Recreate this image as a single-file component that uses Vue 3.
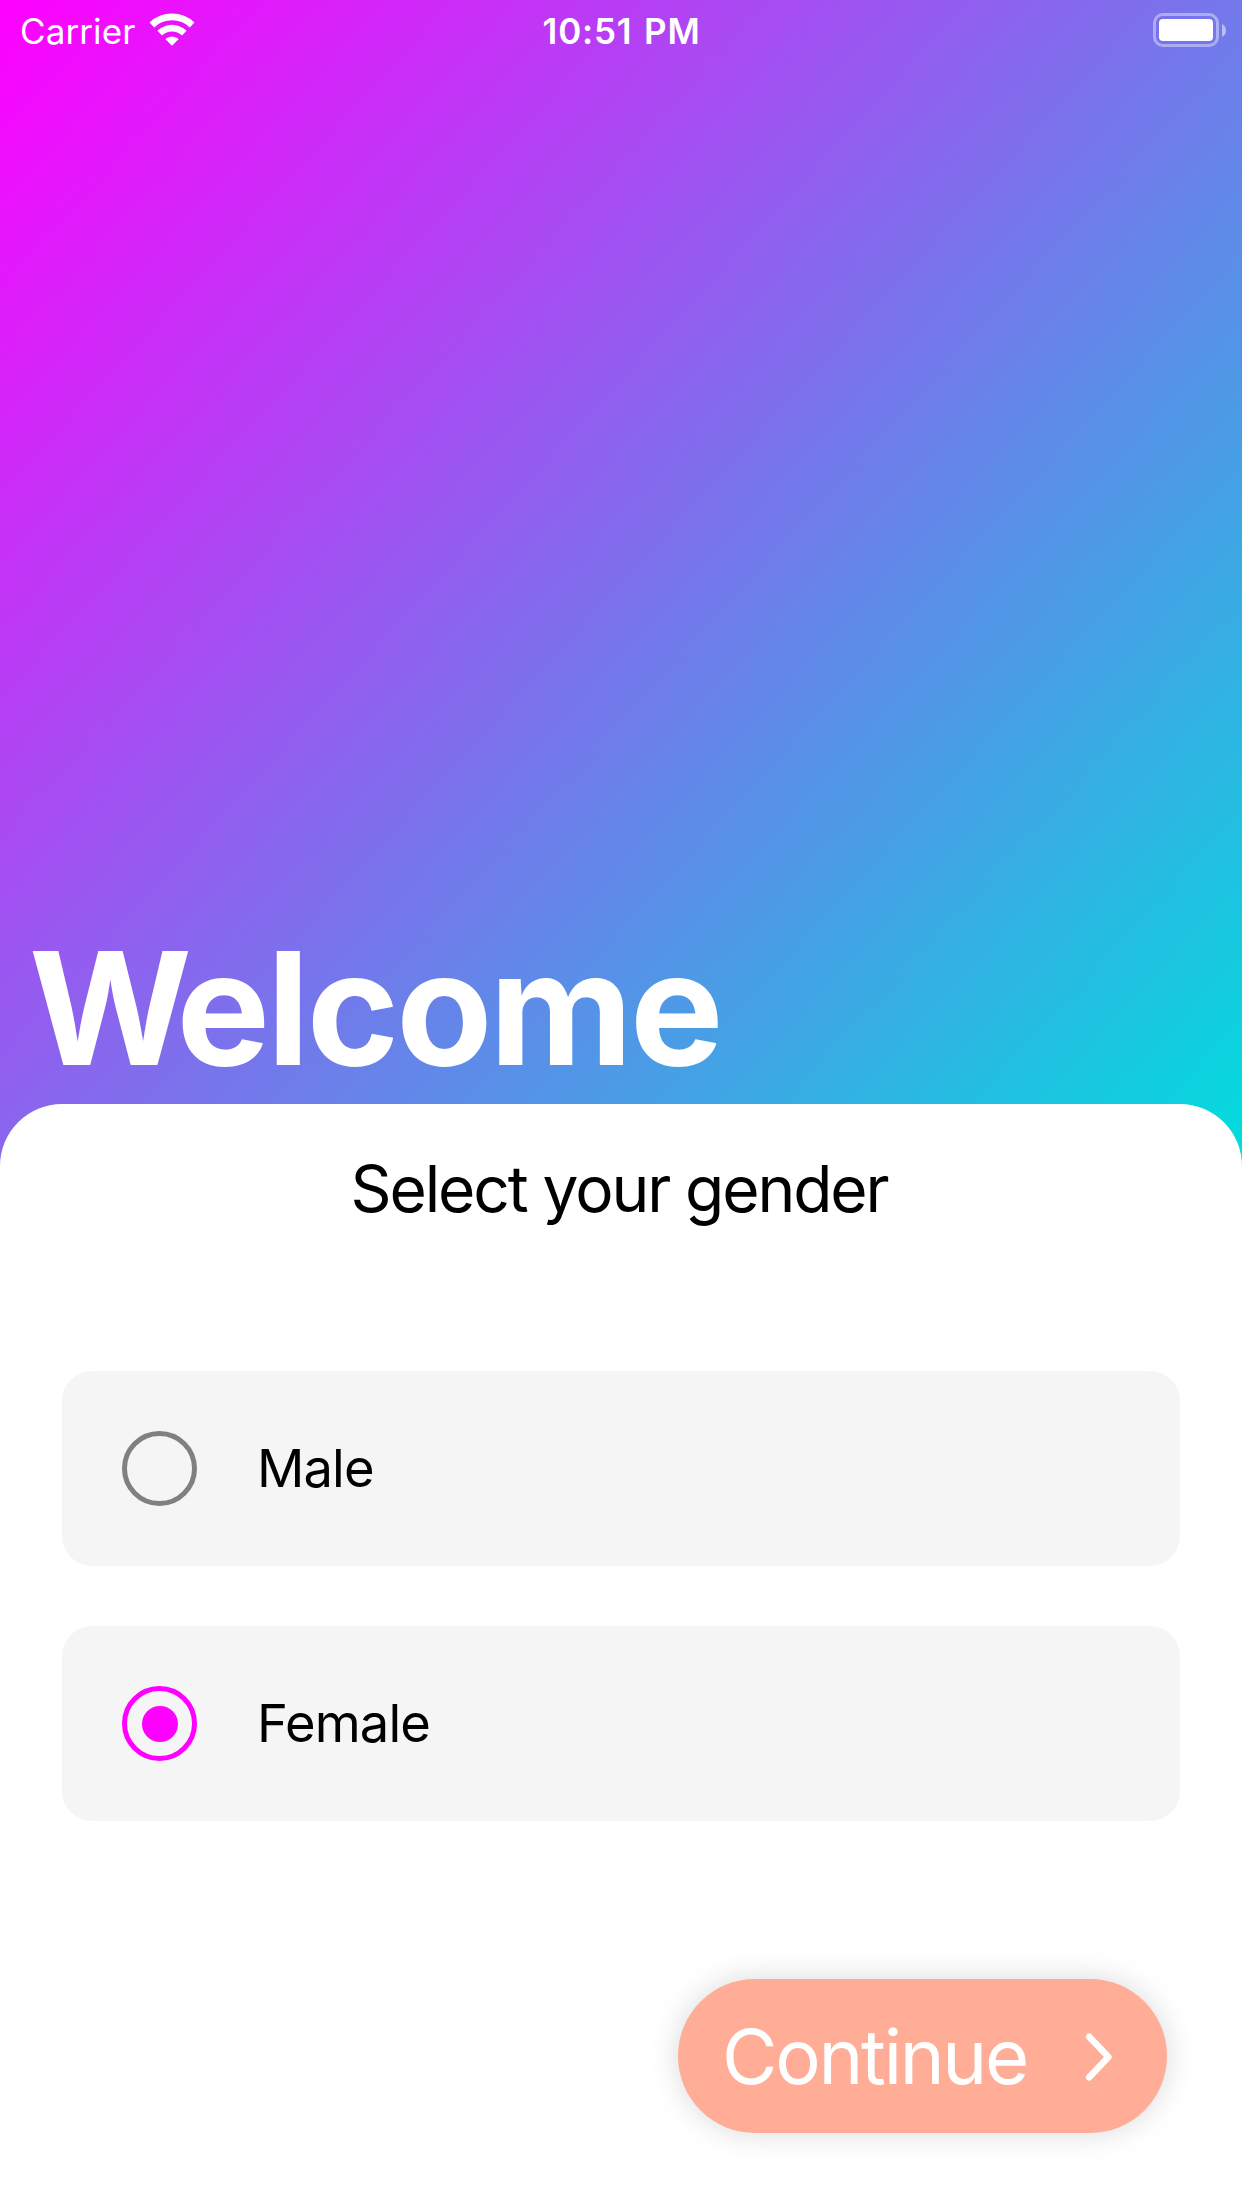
<script setup>
import { ref } from 'vue'

const options = ['Male', 'Female']
const selected = ref('Female')
</script>

<template>
  <main class="screen">
    <section class="hero">
      <div class="status">
        <div class="carrier">
          <span class="carrier-name">Carrier</span>
          <svg class="wifi" width="46" height="34" viewBox="-23 -33 46 34">
            <path d="M-22.4-23.6A32.6 32.6 0 0 1 22.4-23.6L17.8-18.6A25.6 25.6 0 0 0-17.8-18.6Z" />
            <path d="M-14.6-15.3A21.2 21.2 0 0 1 14.6-15.3L10-10.6A14.6 14.6 0 0 0-10-10.6Z" />
            <path d="M-6.7-6.9A9.8 9.8 0 0 1 6.7-6.9L0-.3Z" />
          </svg>
        </div>
        <span class="time">10:51 PM</span>
        <div class="battery">
          <div class="shell"><div class="charge"></div></div>
          <svg width="4" height="13" viewBox="0 0 4 13"><path d="M0 0Q4 2 4 6.5T0 13Z" /></svg>
        </div>
      </div>
      <h1 class="welcome">Welcome</h1>
    </section>

    <section class="sheet">
      <h2 class="question">Select your gender</h2>
      <div class="options">
        <button
          v-for="option in options"
          :key="option"
          class="option"
          :class="{ active: selected === option }"
          @click="selected = option"
        >
          <span class="radio"><span v-if="selected === option" class="dot"></span></span>
          <span class="label">{{ option }}</span>
        </button>
      </div>
      <button class="continue">
        <span class="continue-text">Continue</span>
        <svg class="chevron" width="28" height="50" viewBox="0 0 28 50">
          <path d="M4.2 4.7 23.4 25 4.2 45.3" />
        </svg>
      </button>
    </section>
  </main>
</template>

<style>
body {
  margin: 0;
  background: #fff;
}
</style>

<style scoped>
.screen {
  width: 1242px;
  height: 2208px;
  overflow: hidden;
  background: #fff;
  font-family: Inter, "Liberation Sans", sans-serif;
}
.hero {
  box-sizing: border-box;
  height: 1166px;
  padding-bottom: 63px;
  display: flex;
  flex-direction: column;
  justify-content: space-between;
  background: linear-gradient(132.5deg, #ff00ff, #7d70ec 50%, #00dddd);
  color: #fff;
}
.status {
  height: 62px;
  padding: 0 16px 0 20px;
  display: grid;
  grid-template-columns: 1fr auto 1fr;
  align-items: center;
  font-size: 35px;
  line-height: 42px;
}
.carrier {
  display: flex;
  align-items: center;
  gap: 14px;
}
.carrier-name {
  letter-spacing: 0.1px;
}
.wifi {
  margin-bottom: 2px;
  fill: #fff;
}
.time {
  padding-right: 3px;
  font-weight: 570;
  letter-spacing: 0.8px;
  word-spacing: 2px;
}
.battery {
  margin-bottom: 2px;
  display: flex;
  justify-content: flex-end;
  align-items: center;
  gap: 3px;
}
.shell {
  box-sizing: border-box;
  width: 66px;
  height: 34px;
  padding: 3px;
  border: 3px solid rgba(255, 255, 255, 0.4);
  border-radius: 10px;
}
.charge {
  height: 22px;
  border-radius: 4px;
  background: #fff;
}
.battery svg {
  fill: rgba(255, 255, 255, 0.5);
}
.welcome {
  margin: 0 0 0 29px;
  font-size: 157px;
  line-height: 190px;
  font-weight: 700;
  letter-spacing: -2.9px;
}
.welcome::first-letter {
  letter-spacing: -15.5px;
}
.sheet {
  position: relative;
  box-sizing: border-box;
  height: 1104px;
  margin-top: -62px;
  padding: 46px 62px 0;
  display: flex;
  flex-direction: column;
  border-radius: 62px 62px 0 0;
  background: #fff;
}
.question {
  margin: 0 0 143px;
  padding-right: 4px;
  font-size: 64px;
  line-height: 78px;
  font-weight: 400;
  letter-spacing: -2.1px;
  text-align: center;
}
.options {
  display: flex;
  flex-direction: column;
  gap: 60px;
}
.option {
  height: 195px;
  padding: 0 60px;
  display: flex;
  align-items: center;
  gap: 60px;
  border: 0;
  border-radius: 30px;
  background: #f5f5f5;
  color: #000;
  font: 400 52.5px/64px Inter, "Liberation Sans", sans-serif;
  letter-spacing: -0.9px;
}
.label {
  margin-bottom: 2px;
}
.radio {
  box-sizing: border-box;
  width: 75px;
  height: 75px;
  display: flex;
  align-items: center;
  justify-content: center;
  border: 5px solid #808080;
  border-radius: 50%;
}
.active .radio {
  border-color: #ff00ff;
}
.dot {
  width: 36px;
  height: 36px;
  border-radius: 50%;
  background: #ff00ff;
}
.continue {
  align-self: flex-end;
  box-sizing: border-box;
  width: 489px;
  height: 154px;
  margin: 158px 13px 0 0;
  padding: 0 54px 0 44px;
  display: flex;
  align-items: center;
  justify-content: space-between;
  border: 0;
  border-radius: 77px;
  background: #ffad96;
  box-shadow: 0 0 30px rgba(0, 0, 0, 0.15);
  color: #fff;
  font: 400 76px/92px Inter, "Liberation Sans", sans-serif;
  letter-spacing: -2.3px;
}
.chevron {
  margin-top: 2px;
  fill: none;
  stroke: #fff;
  stroke-width: 6.6px;
  stroke-linecap: round;
  stroke-linejoin: round;
}
</style>
